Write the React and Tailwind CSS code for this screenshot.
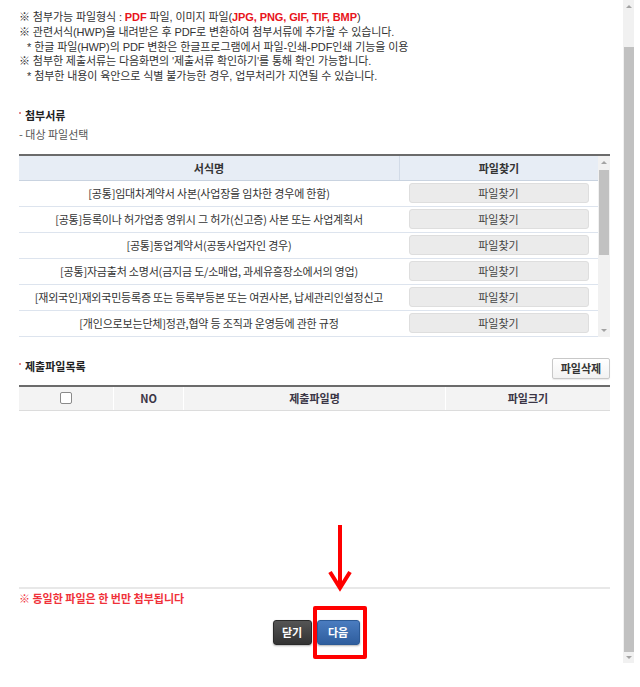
const rows = [
  "[공통]임대차계약서 사본(사업장을 임차한 경우에 한함)",
  "[공통]등록이나 허가업종 영위시 그 허가(신고증) 사본 또는 사업계획서",
  "[공통]동업계약서(공동사업자인 경우)",
  "[공통]자금출처 소명서(금지금 도/소매업, 과세유흥장소에서의 영업)",
  "[재외국인]재외국민등록증 또는 등록부등본 또는 여권사본, 납세관리인설정신고",
  "[개인으로보는단체]정관,협약 등 조직과 운영등에 관한 규정",
];

function UpTri() {
  return <div className="w-0 h-0 border-l-[3px] border-r-[3px] border-b-[3px] border-l-transparent border-r-transparent border-b-[#a3a3a3]" />;
}
function DownTri() {
  return <div className="w-0 h-0 border-l-[3px] border-r-[3px] border-t-[3px] border-l-transparent border-r-transparent border-t-[#a3a3a3]" />;
}
function Dot() {
  return <span className="inline-block w-[2px] h-[2px] bg-[#e58a8a] mr-[4px] mb-[3px]" />;
}

export default function App() {
  return (
    <div className="relative w-[640px] h-[687px] bg-white overflow-hidden flex font-['Noto_Sans_CJK_KR','Noto_Sans',sans-serif] text-[#333] text-[11px]">
      {/* main */}
      <div className="w-[623px] pl-[19px] pr-[13px] pt-[10px] flex flex-col">
        <div className="leading-[14.75px] tracking-[-0.1px] font-['Liberation_Sans','Noto_Sans_CJK_KR',sans-serif]">
          <div>※ 첨부가능 파일형식 : <b className="text-[#e8141b]">PDF</b> 파일, 이미지 파일(<b className="text-[#e8141b]">JPG, PNG, GIF, TIF, BMP</b>)</div>
          <div>※ 관련서식(HWP)을 내려받은 후 PDF로 변환하여 첨부서류에 추가할 수 있습니다.</div>
          <div className="pl-[8px]">* 한글 파일(HWP)의 PDF 변환은 한글프로그램에서 파일-인쇄-PDF인쇄 기능을 이용</div>
          <div>※ 첨부한 제출서류는 다음화면의 '제출서류 확인하기'를 통해 확인 가능합니다.</div>
          <div className="pl-[8px]">* 첨부한 내용이 육안으로 식별 불가능한 경우, 업무처리가 지연될 수 있습니다.</div>
        </div>

        <div className="mt-[22px] h-[18px] flex items-center font-bold text-[#222]">
          <Dot />첨부서류
        </div>
        <div className="mt-[1px] h-[18px] flex items-center text-[#555]">- 대상 파일선택</div>

        {/* table 1 */}
        <div className="mt-[11px] border-t-2 border-[#6b6b6b] flex">
          <div className="w-[579px]">
            <div className="h-[25px] flex bg-[#e7edf5] border-b border-[#c9d3e0] font-bold">
              <div className="w-[380px] flex items-center justify-center">서식명</div>
              <div className="flex-1 flex items-center justify-center border-l border-[#d2dbe7]">파일찾기</div>
            </div>
            {rows.map((r, i) => (
              <div key={i} className="h-[26px] flex border-b border-[#dde4ee]">
                <div className="w-[380px] flex items-center justify-center whitespace-nowrap tracking-[-0.2px]">{r}</div>
                <div className="flex-1 flex items-center justify-center">
                  <div className="w-[180px] h-[20px] rounded-[3px] bg-[#ebebeb] border border-[#dedede] flex items-center justify-center text-[#444]">파일찾기</div>
                </div>
              </div>
            ))}
          </div>
          <div className="w-[12px] bg-[#f1f1f1] flex flex-col items-center">
            <div className="h-[13px] flex items-center"><UpTri /></div>
            <div className="mt-[1px] w-[10px] h-[85px] bg-[#c1c1c1]" />
            <div className="flex-1" />
            <div className="h-[12px] flex items-center"><DownTri /></div>
          </div>
        </div>

        {/* 제출파일목록 */}
        <div className="mt-[21px] h-[22px] flex items-start justify-between">
          <div className="font-bold text-[#222] flex items-center h-[16px]">
            <Dot />제출파일목록
          </div>
          <div className="w-[58px] h-[21px] rounded-[2px] border border-[#c8c8c8] bg-gradient-to-b from-white to-[#f2f2f2] shadow-[0_1px_1px_rgba(0,0,0,0.08)] flex items-center justify-center font-bold text-[#333]">파일삭제</div>
        </div>

        <div className="mt-[5px] border-t-2 border-[#6b6b6b] bg-[#f3f3f3] h-[26px] flex border-b border-b-[#dcdcdc] font-bold text-[#3a3545]">
          <div className="w-[94px] flex items-center justify-center">
            <div className="w-[12px] h-[12px] rounded-[2px] border border-[#8a8a8a] bg-white" />
          </div>
          <div className="w-[70px] flex items-center justify-center border-l border-white">NO</div>
          <div className="w-[262px] flex items-center justify-center border-l border-white">제출파일명</div>
          <div className="flex-1 flex items-center justify-center border-l border-white">파일크기</div>
        </div>

        <div className="mt-[176px] border-t-2 border-[#e8e8e8]" />
        <div className="mt-[1px] h-[16px] flex items-center font-bold text-[#f0323a]">※ 동일한 파일은 한 번만 첨부됩니다</div>

        <div className="mt-[14px] flex justify-center gap-[5px] pl-[3px]">
          <div className="w-[39px] h-[25px] rounded-[3px] bg-gradient-to-b from-[#555] to-[#333] border border-[#2a2a2a] shadow-[0_1px_2px_rgba(0,0,0,0.3)] text-white font-bold flex items-center justify-center">닫기</div>
          <div className="w-[43px] h-[25px] rounded-[3px] bg-gradient-to-b from-[#4a7cc0] to-[#2f5e9e] border border-[#2c5a96] shadow-[0_1px_2px_rgba(0,0,0,0.3)] text-white font-bold flex items-center justify-center">다음</div>
        </div>
      </div>

      {/* page scrollbar */}
      <div className="w-[11px] h-[663px] bg-[#f1f1f1] flex flex-col items-center">
        <div className="h-[12px] flex items-center"><UpTri /></div>
        <div className="mt-[35px] w-[10px] h-[605px] bg-[#c1c1c1]" />
        <div className="flex-1 flex items-center"><DownTri /></div>
      </div>

      {/* annotation overlay */}
      <svg className="absolute left-[325px] top-[522px]" width="30" height="72" viewBox="0 0 30 72">
        <line x1="15" y1="3" x2="15" y2="64" stroke="#ff0000" strokeWidth="4" />
        <polyline points="5,50 15,66 25,50" fill="none" stroke="#ff0000" strokeWidth="4" strokeLinejoin="miter" />
      </svg>
      <div className="absolute left-[313px] top-[606px] w-[54px] h-[53px] border-[4px] border-[#ff0000] rounded-[2px]" />
    </div>
  );
}
